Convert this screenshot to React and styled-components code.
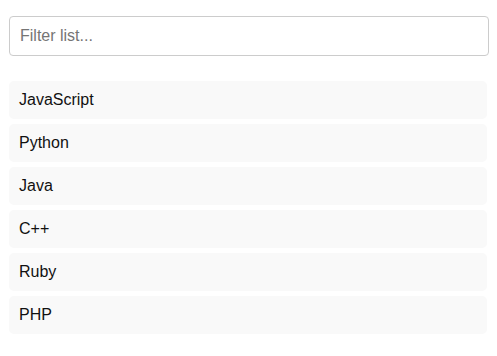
import React, { useState } from "react";
import styled, { createGlobalStyle } from "styled-components";

const GlobalStyle = createGlobalStyle`
  body {
    margin: 0;
    background: #ffffff;
    font-family: "Liberation Sans", Arial, sans-serif;
  }
`;

const Container = styled.div`
  width: 480px;
  padding: 16px 0 0 9px;
`;

const SearchInput = styled.input`
  display: block;
  width: 480px;
  height: 40px;
  box-sizing: border-box;
  padding: 10px;
  font-size: 16px;
  font-family: "Liberation Sans", Arial, sans-serif;
  border: 1px solid #cccccc;
  border-radius: 4px;
  outline: none;
  color: #222;
  margin-bottom: 25px;

  &::placeholder {
    color: #757575;
  }
`;

const List = styled.ul`
  list-style: none;
  margin: 0;
  padding: 0;
  width: 478px;
`;

const Item = styled.li`
  height: 38px;
  box-sizing: border-box;
  padding: 10px;
  margin-bottom: 5px;
  background: #f9f9f9;
  border-radius: 5px;
  font-size: 16px;
  line-height: 18px;
  color: #111;
`;

const languages = ["JavaScript", "Python", "Java", "C++", "Ruby", "PHP"];

const App = () => {
  const [query, setQuery] = useState("");
  const shown = languages.filter((l) =>
    l.toLowerCase().includes(query.toLowerCase())
  );

  return (
    <Container>
      <GlobalStyle />
      <SearchInput
        placeholder="Filter list..."
        value={query}
        onChange={(e) => setQuery(e.target.value)}
      />
      <List>
        {shown.map((l) => (
          <Item key={l}>{l}</Item>
        ))}
      </List>
    </Container>
  );
};

export default App;
